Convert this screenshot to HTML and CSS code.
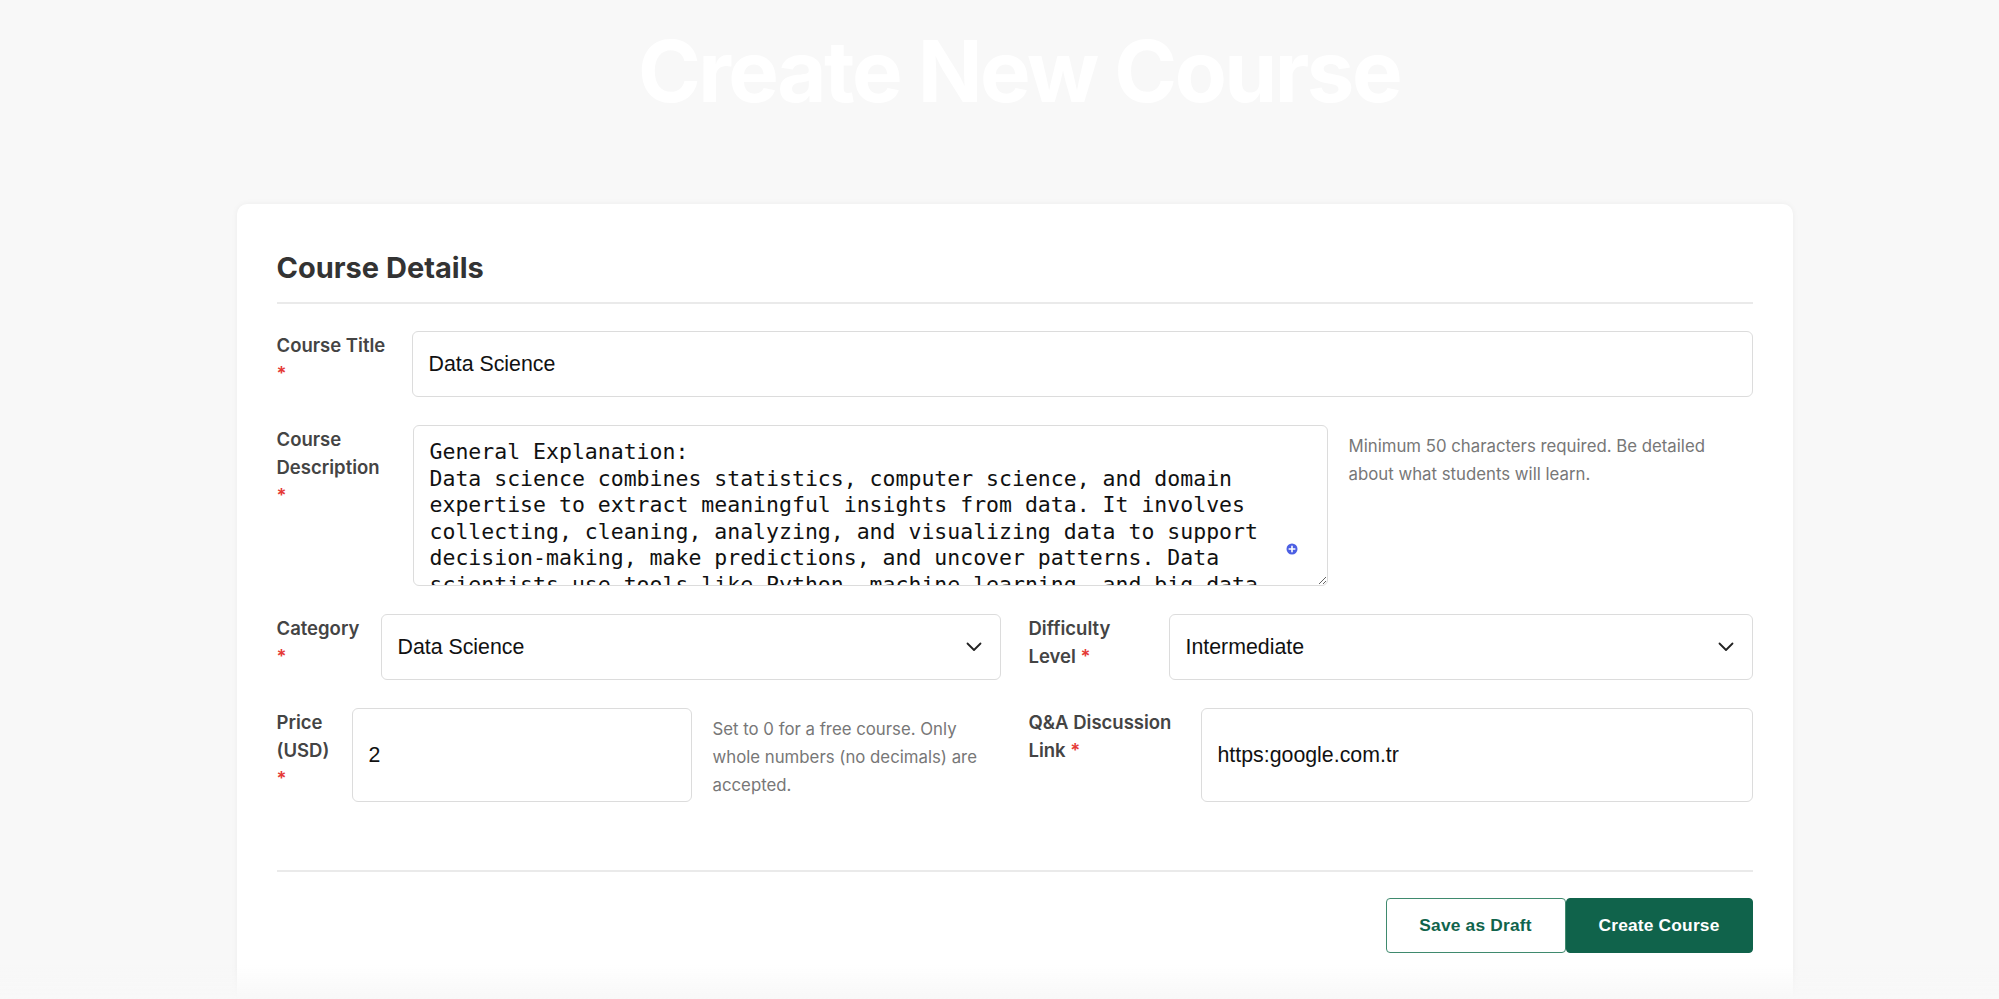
FILE: index.html
```html
<!DOCTYPE html>
<html lang="en">
<head>
<meta charset="utf-8">
<title>Create New Course</title>
<link rel="stylesheet" href="styles.css">
</head>
<body>
<div class="page">
  <h1 class="page-title">Create New Course</h1>
  <div class="card">
    <h2 class="section-title">Course Details</h2>

    <div class="form-row">
      <label class="lbl lbl-title">Course Title <span class="req">*</span></label>
      <input class="field" type="text" value="Data Science">
    </div>

    <div class="form-row">
      <label class="lbl lbl-desc">Course Description <span class="req">*</span></label>
      <div class="textarea-wrap">
        <textarea class="area">General Explanation:
Data science combines statistics, computer science, and domain expertise to extract meaningful insights from data. It involves collecting, cleaning, analyzing, and visualizing data to support decision-making, make predictions, and uncover patterns. Data scientists use tools like Python, machine learning, and big data technologies to solve real-world problems across industries.</textarea>
        <svg class="ext-icon" width="12" height="12" viewBox="0 0 12 12"><circle cx="6" cy="6" r="5.5" fill="#4c5fe3"/><path d="M6 3.2v5.6M3.2 6h5.6" stroke="#fff" stroke-width="1.6" stroke-linecap="round"/></svg>
      </div>
      <p class="help help-desc">Minimum 50 characters required. Be detailed about what students will learn.</p>
    </div>

    <div class="grid-2">
      <div class="form-row">
        <label class="lbl lbl-cat">Category <span class="req">*</span></label>
        <div class="select-wrap">
          <select class="field select">
            <option>Data Science</option>
          </select>
          <svg class="chev" width="16" height="10" viewBox="0 0 16 10"><path d="M1.5 1.5L8 8l6.5-6.5" fill="none" stroke="#222" stroke-width="1.8" stroke-linecap="round" stroke-linejoin="round"/></svg>
        </div>
      </div>
      <div class="form-row">
        <label class="lbl lbl-diff">Difficulty Level <span class="req">*</span></label>
        <div class="select-wrap">
          <select class="field select">
            <option>Intermediate</option>
          </select>
          <svg class="chev" width="16" height="10" viewBox="0 0 16 10"><path d="M1.5 1.5L8 8l6.5-6.5" fill="none" stroke="#222" stroke-width="1.8" stroke-linecap="round" stroke-linejoin="round"/></svg>
        </div>
      </div>
    </div>

    <div class="grid-2">
      <div class="form-row">
        <label class="lbl lbl-price">Price (USD) <span class="req">*</span></label>
        <input class="field field-price" type="text" value="2">
        <p class="help help-price">Set to 0 for a free course. Only whole numbers (no decimals) are accepted.</p>
      </div>
      <div class="form-row">
        <label class="lbl lbl-qa">Q&amp;A Discussion Link <span class="req">*</span></label>
        <input class="field" type="text" value="https:google.com.tr">
      </div>
    </div>

    <div class="actions">
      <button class="btn btn-outline">Save as Draft</button>
      <button class="btn btn-primary">Create Course</button>
    </div>
  </div>
</div>
<div class="bottom-fade"></div>
</body>
</html>
```
FILE: styles.css
```css
* { box-sizing: border-box; }

html, body {
  margin: 0;
  padding: 0;
  background: #f8f8f8;
  font-family: Inter, "Liberation Sans", sans-serif;
  color: #333;
}

.page {
  padding-left: 30px;
}

.page-title {
  margin: 20px 0 81px;
  padding-left: 9px;
  text-align: center;
  font-family: Inter, sans-serif;
  font-weight: 700;
  font-size: 85px;
  line-height: 103px;
  letter-spacing: -2.5px;
  color: #ffffff;
}

.card {
  width: 1556px;
  margin: 0 auto;
  background: #fff;
  border-radius: 10px;
  box-shadow: 0 0 6px rgba(0, 0, 0, 0.05);
  padding: 46px 40px 60px;
  min-height: 820px;
}

.section-title {
  margin: 0 0 27px;
  padding-bottom: 17px;
  border-bottom: 2px solid #eaeaea;
  font-size: 29px;
  line-height: 35px;
  font-weight: 700;
  color: #333;
}

.form-row {
  display: flex;
  align-items: stretch;
  margin-bottom: 28px;
}

.grid-2 {
  display: grid;
  grid-template-columns: 1fr 1fr;
  column-gap: 28px;
}

.grid-2 .form-row {
  min-width: 0;
}

.lbl {
  flex: 0 0 auto;
  font-size: 18.5px;
  line-height: 28px;
  font-weight: 600;
  color: #444;
}

.lbl-title { width: 135px; padding-right: 22px; }
.lbl-desc { width: 136px; padding-right: 28px; }
.lbl-cat { width: 104px; padding-right: 14px; }
.lbl-diff { width: 140px; padding-right: 36px; }
.lbl-price { width: 75px; padding-right: 14px; }
.lbl-qa { width: 172px; padding-right: 20px; }

.req {
  color: #e53935;
  font-weight: 600;
}

.field {
  flex: 1 1 auto;
  min-width: 0;
  min-height: 66px;
  padding: 0 16px;
  border: 1px solid #dcdcdc;
  border-radius: 6px;
  background: #fff;
  font-family: "Liberation Sans", Arial, sans-serif;
  font-size: 21.33px;
  color: #111;
  outline: none;
}

.field-price {
  flex: 0 0 340px;
}

.textarea-wrap {
  position: relative;
  flex: 0 0 915px;
  height: 161px;
}

.area {
  display: block;
  width: 100%;
  height: 161px;
  padding: 13px 16px;
  border: 1px solid #dcdcdc;
  border-radius: 6px;
  font-family: "DejaVu Sans Mono", monospace;
  font-size: 21.5px;
  line-height: 26.5px;
  color: #111;
  overflow: hidden;
  resize: vertical;
  outline: none;
}

.ext-icon {
  position: absolute;
  left: 873px;
  top: 118px;
}

.help {
  margin: 0;
  padding: 7px 0 3px;
  font-size: 16.8px;
  line-height: 28px;
  color: #777;
}

.help-desc {
  flex: 1 1 auto;
  margin-left: 21px;
}

.help-price {
  flex: 1 1 0;
  min-width: 0;
  margin-left: 21px;
}

.select-wrap {
  position: relative;
  flex: 1 1 auto;
  display: flex;
}

.select {
  width: 100%;
  -webkit-appearance: none;
  appearance: none;
}

.chev {
  position: absolute;
  right: 19px;
  top: 28px;
  pointer-events: none;
}

.actions {
  display: flex;
  justify-content: flex-end;
  margin-top: 40px;
  padding-top: 26px;
  border-top: 2px solid #eaeaea;
}

.btn {
  height: 55px;
  padding: 0;
  border-radius: 4px;
  font-family: "Liberation Sans", Arial, sans-serif;
  font-size: 17.33px;
  font-weight: 700;
  letter-spacing: 0.2px;
  white-space: nowrap;
  cursor: pointer;
}

.btn-outline {
  width: 180px;
  background: #fff;
  color: #10644c;
  border: 1.5px solid #3f8a6e;
}

.btn-primary {
  width: 187px;
  background: #10634b;
  color: #fff;
  border: 1px solid #10634b;
}

.bottom-fade {
  position: fixed;
  left: 0;
  right: 0;
  bottom: 0;
  height: 34px;
  background: linear-gradient(rgba(248, 248, 248, 0), #f8f8f8);
  pointer-events: none;
}
```
